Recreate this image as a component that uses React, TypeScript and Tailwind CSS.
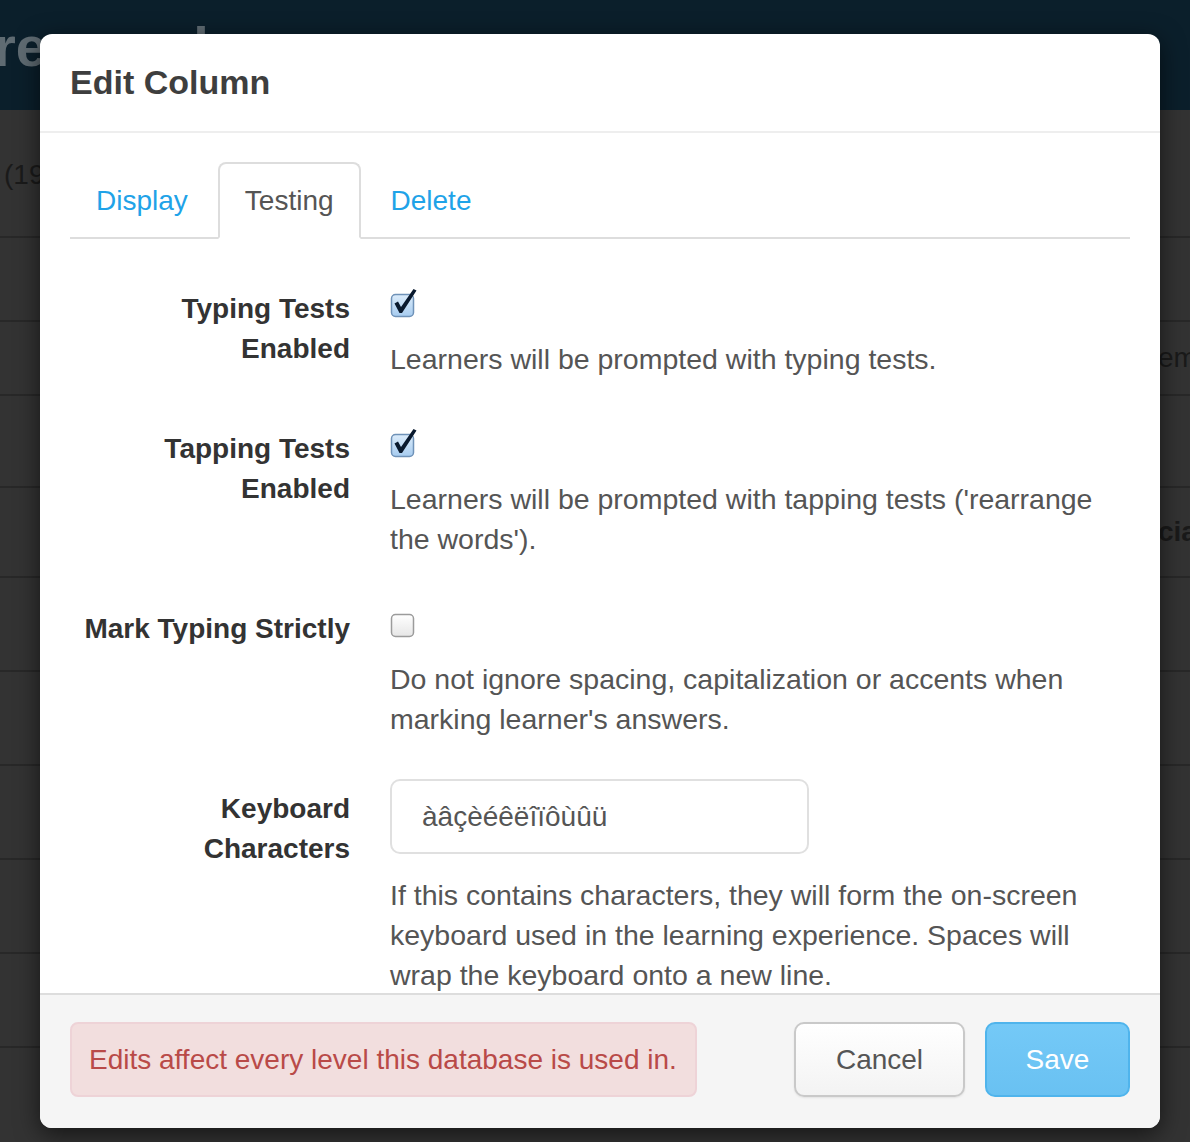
const font = { fontFamily: '"Liberation Sans", Arial, sans-serif' };

const CheckedBox = () => (
  <svg width="30" height="30" viewBox="0 0 30 30">
    <defs>
      <linearGradient id="cbOn" x1="0" y1="0" x2="0" y2="1">
        <stop offset="0" stopColor="#dcecfb" />
        <stop offset="1" stopColor="#a7ccef" />
      </linearGradient>
    </defs>
    <rect x="1.5" y="5.5" width="22" height="22" rx="4" fill="url(#cbOn)" stroke="#6f92b8" strokeWidth="1.5" />
    <path d="M4.5 14.5 L8 12.5 L11 18 L23.5 0 L26.5 1.5 L12 24 L9.5 24 Z" fill="#0a1a2e" />
  </svg>
);

const EmptyBox = () => (
  <svg width="30" height="30" viewBox="0 0 30 30">
    <defs>
      <linearGradient id="cbOff" x1="0" y1="0" x2="0" y2="1">
        <stop offset="0" stopColor="#ffffff" />
        <stop offset="1" stopColor="#e6e6e6" />
      </linearGradient>
    </defs>
    <rect x="1.5" y="1.5" width="22" height="22" rx="4" fill="url(#cbOff)" stroke="#9b9b9b" strokeWidth="1.5" />
  </svg>
);

const Label = ({ children }: { children: React.ReactNode }) => (
  <div className="w-[280px] shrink-0 pt-[10px] text-right text-[28px] font-bold leading-[40px] text-[#333]">
    {children}
  </div>
);

const Help = ({ children, className = "" }: { children: React.ReactNode; className?: string }) => (
  <p className={`text-[28.5px] leading-[40px] text-[#555] ${className}`}>{children}</p>
);

const CheckRow = ({ label, checked, help }: { label: React.ReactNode; checked: boolean; help: string }) => (
  <div className="mb-[40px] flex">
    <Label>{label}</Label>
    <div className="ml-[40px] flex-1">
      <div className={checked ? "h-[50px] pt-[10px]" : "h-[50px] pt-[14px]"}>
        {checked ? <CheckedBox /> : <EmptyBox />}
      </div>
      <Help className="mt-[10px]">{help}</Help>
    </div>
  </div>
);

const bgRows = [84, 74, 92, 90, 94, 94, 94, 94, 94];

export default function App() {
  return (
    <div className="relative h-[1142px] w-[1190px] overflow-hidden bg-[#333]" style={font}>
      {/* page behind the backdrop */}
      <div className="h-[110px] bg-[#0b1f2b] pt-[12px]">
        <span className="-ml-[6px] block text-[56px] font-bold leading-[70px] text-[#5f6b72]">research</span>
      </div>
      <div className="h-[128px] border-b-2 border-[#282828] pl-[4px] pt-[44px] text-[28px] text-[#1a1a1a]">(19</div>
      {bgRows.map((h, i) => (
        <div
          key={i}
          className="overflow-hidden whitespace-nowrap border-b-2 border-[#282828] pl-[1158px] text-[28px] leading-[40px] text-[#1a1a1a]"
          style={{ height: h, paddingTop: (h - 42) / 2 }}
        >
          {i === 1 ? "em" : i === 3 ? <b>cia</b> : ""}
        </div>
      ))}

      {/* modal */}
      <div className="absolute left-[40px] top-[34px] flex h-[1094px] w-[1120px] flex-col overflow-hidden rounded-[12px] bg-white shadow-[0_6px_24px_rgba(0,0,0,0.6)]">
        <div className="flex h-[99px] shrink-0 items-center border-b-2 border-[#eee] px-[30px]">
          <h3 className="text-[34px] font-bold text-[#3e3e3e]">Edit Column</h3>
        </div>

        <div className="flex-1 overflow-hidden px-[30px] pt-[29px]">
          <ul className="flex border-b-2 border-[#ddd]">
            <li className="mr-[4px] -mb-[2px] flex h-[77px] items-center rounded-t-[8px] border-2 border-transparent px-[24px] text-[28px] text-[#1fa3e8]">
              Display
            </li>
            <li className="mr-[4px] -mb-[2px] flex h-[77px] items-center rounded-t-[8px] border-2 border-[#ddd] border-b-white bg-white px-[25px] text-[28px] text-[#555]">
              Testing
            </li>
            <li className="-mb-[2px] flex h-[77px] items-center rounded-t-[8px] border-2 border-transparent px-[24px] text-[28px] text-[#1fa3e8]">
              Delete
            </li>
          </ul>

          <div className="mt-[40px]">
            <CheckRow
              label={<>Typing Tests<br />Enabled</>}
              checked
              help="Learners will be prompted with typing tests."
            />
            <CheckRow
              label={<>Tapping Tests<br />Enabled</>}
              checked
              help="Learners will be prompted with tapping tests ('rearrange the words')."
            />
            <CheckRow
              label="Mark Typing Strictly"
              checked={false}
              help="Do not ignore spacing, capitalization or accents when marking learner's answers."
            />
            <div className="flex">
              <Label>
                Keyboard
                <br />
                Characters
              </Label>
              <div className="ml-[40px] flex-1">
                <div className="flex h-[75px] w-[419px] items-center rounded-[10px] border-2 border-[#e0e0e0] pl-[30px] text-[28px] text-[#555]">
                  àâçèéêëîïôùûü
                </div>
                <Help className="mt-[21px]">
                  If this contains characters, they will form the on-screen keyboard used in the learning experience. Spaces will wrap the keyboard onto a new line.
                </Help>
              </div>
            </div>
          </div>
        </div>

        <div className="flex h-[135px] shrink-0 items-start border-t-2 border-[#ddd] bg-[#f5f5f5] pl-[30px] pr-[30px] pt-[27px]">
          <div className="flex h-[75px] w-[627px] items-center rounded-[8px] border-2 border-[#eed3d7] bg-[#f2dede] pl-[17px] text-[28px] text-[#b94a48]">
            Edits affect every level this database is used in.
          </div>
          <div className="ml-auto flex gap-[20px]">
            <button className="h-[75px] w-[171px] rounded-[10px] border-2 border-[#c9c9c9] bg-gradient-to-b from-white to-[#f3f3f3] text-[28px] text-[#555] shadow-[0_1px_2px_rgba(0,0,0,0.08)]">
              Cancel
            </button>
            <button className="h-[75px] w-[145px] rounded-[10px] border-2 border-[#4fb4ec] bg-gradient-to-b from-[#74c9f7] to-[#69c1f2] text-[28px] text-white">
              Save
            </button>
          </div>
        </div>
      </div>
    </div>
  );
}
